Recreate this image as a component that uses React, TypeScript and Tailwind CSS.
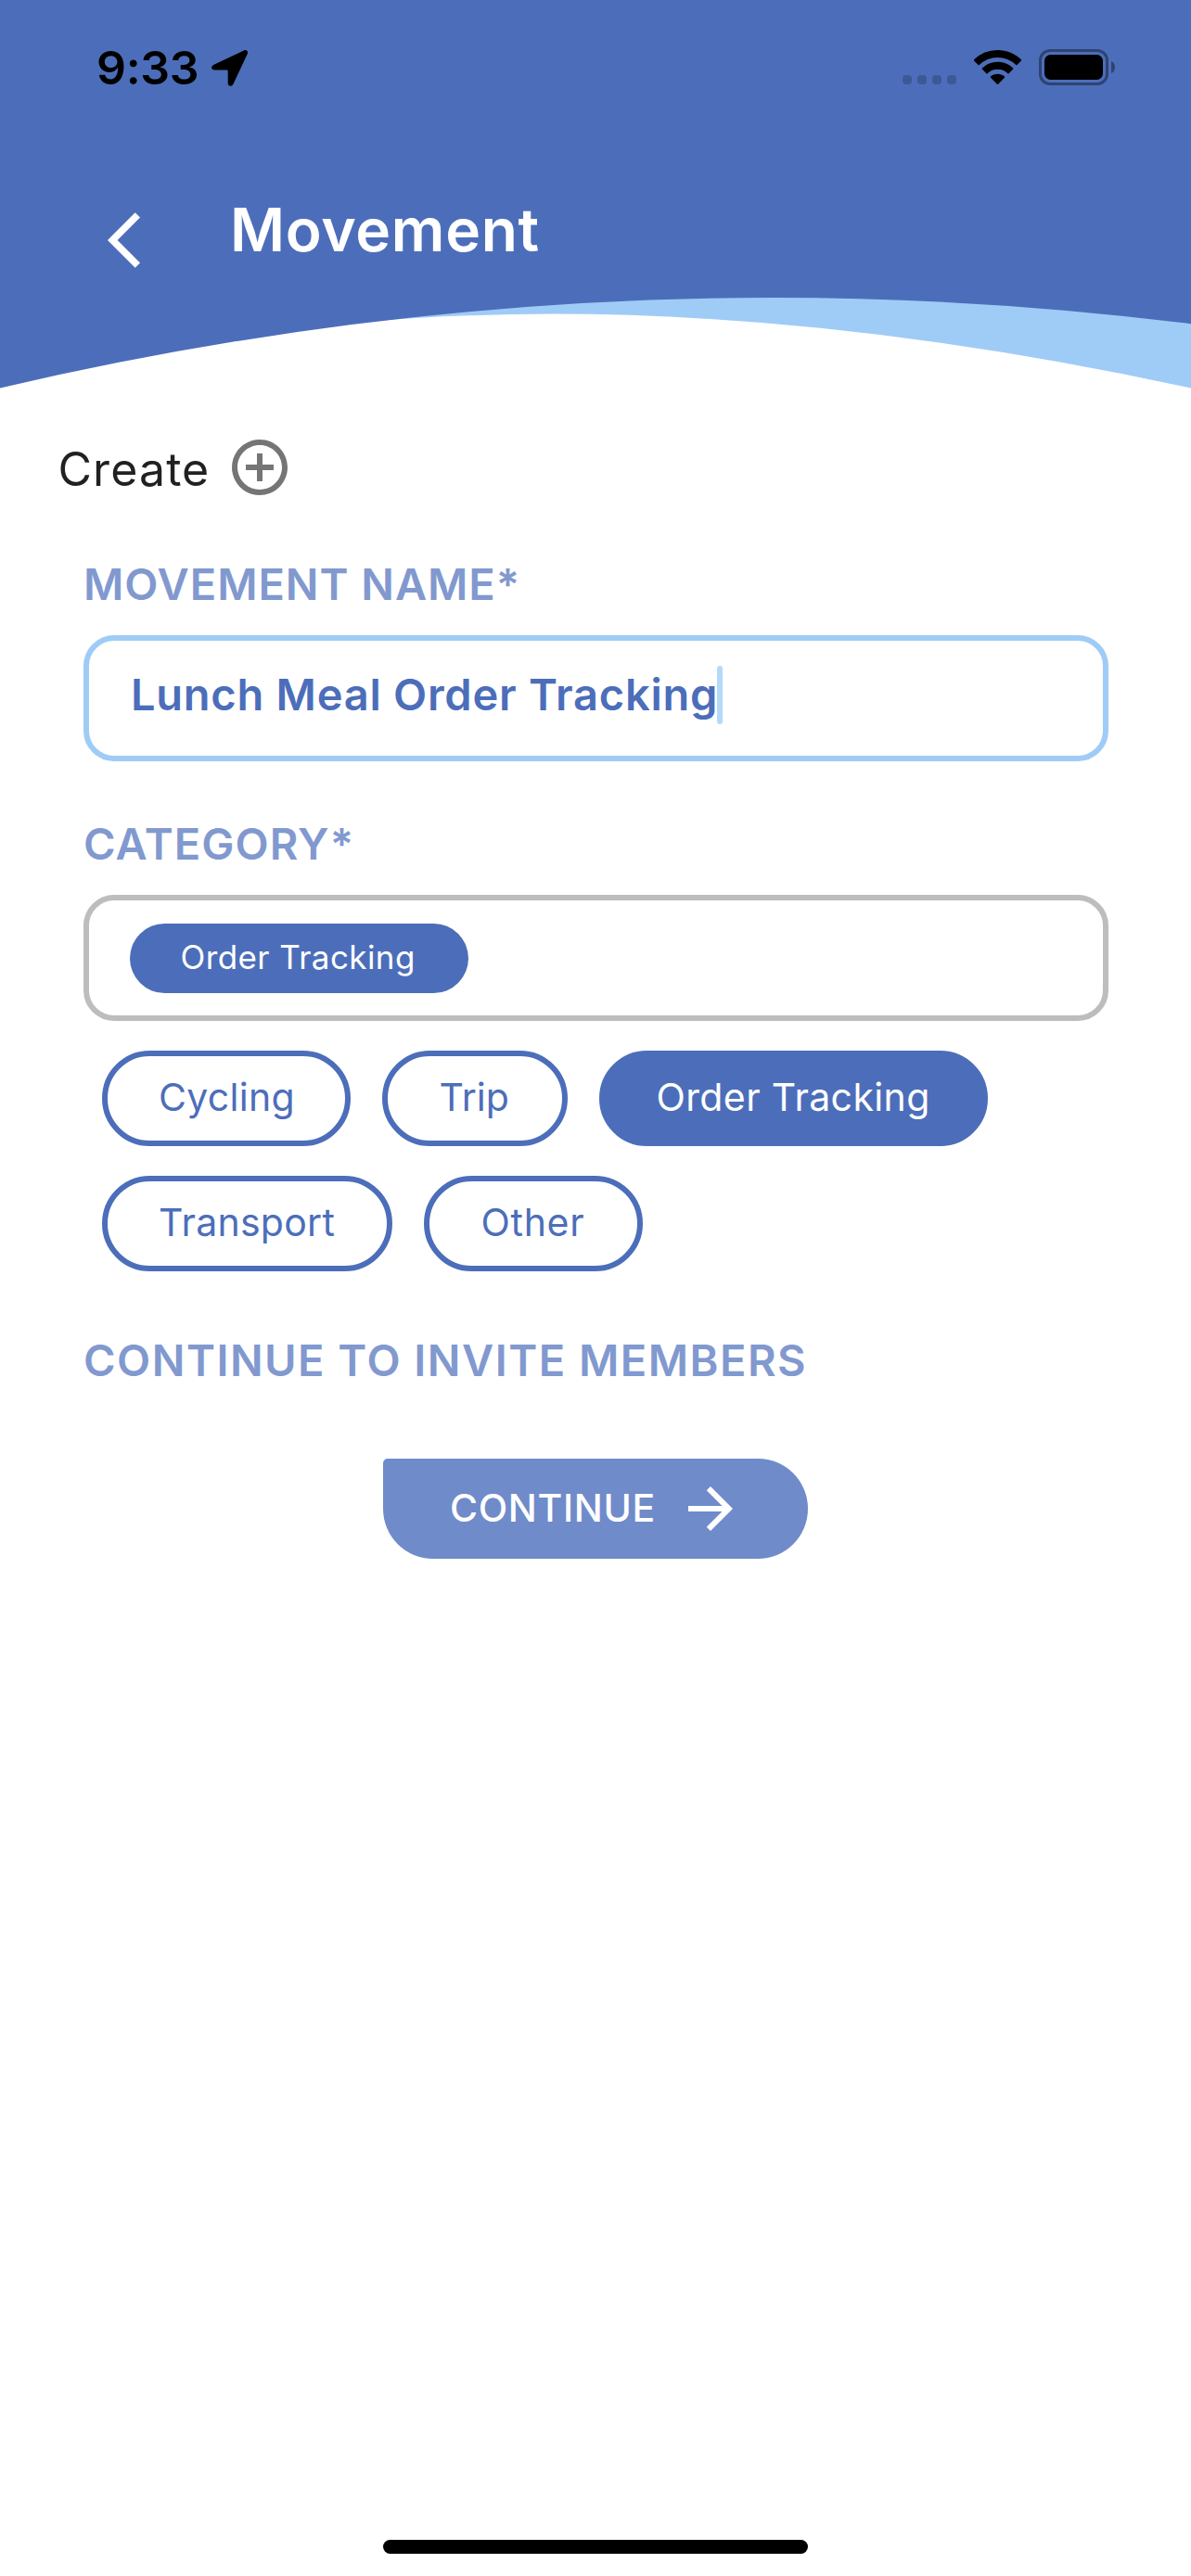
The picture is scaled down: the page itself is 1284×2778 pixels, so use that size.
type ChipProps = { label: string; className: string; selected?: boolean }

function StatusBar() {
  return (
    <div className="relative flex h-[103px] items-start pl-[104px] pr-[82px] pt-[43px] text-black">
      <span className="text-[50px] font-semibold leading-[60px] tracking-[-0.35px]">9:33</span>
      <svg className="ml-[14px] mt-[11px] h-[39px] w-[39px]" viewBox="0 0 39 39" aria-hidden="true">
        <path
          d="M2.6 15.8 34.8.5c3-1.3 5.1.9 3.9 3.8L23.6 36.4c-1.7 3.6-5.9 2.9-5.9-.9V22.6a1.2 1.2 0 0 0-1.2-1.2H3.3c-3.8 0-4.3-4-.7-5.6Z"
          fill="currentColor"
        />
      </svg>
      <div className="ml-auto mt-[38px] flex gap-[6px]">
        {[0, 1, 2, 3].map((dot) => (
          <span key={dot} className="h-[10px] w-[10px] rounded-[4px] bg-[#3d5896]" />
        ))}
      </div>
      <svg className="ml-[19px] mt-[11px] h-[38px] w-[51px]" viewBox="0 0 51 38" aria-hidden="true">
        <path
          d="M25.5 0C35.4 0 44.4 3.9 51 10.3c.3.3.3.8 0 1.1l-4.6 4.7c-.3.3-.8.3-1.1 0A28.5 28.5 0 0 0 25.5 8 28.5 28.5 0 0 0 5.7 16.1c-.3.3-.8.3-1.1 0L0 11.4c-.3-.3-.3-.8 0-1.1A36.6 36.6 0 0 1 25.5 0Z"
          fill="currentColor"
        />
        <path
          d="M25.5 12.8c6.5 0 12.4 2.5 16.7 6.6.4.3.4.8 0 1.2l-4.6 4.6c-.3.3-.8.3-1.1 0a16 16 0 0 0-22 0c-.3.3-.8.3-1.1 0l-4.6-4.6c-.4-.4-.4-.9 0-1.2a24.2 24.2 0 0 1 16.7-6.6Z"
          fill="currentColor"
        />
        <path
          d="M25.5 25.7c2.9 0 5.5 1 7.5 2.8.4.3.4.8 0 1.2l-6.9 7c-.3.4-.8.4-1.2 0l-6.9-7c-.4-.4-.4-.9 0-1.2 2-1.8 4.6-2.8 7.5-2.8Z"
          fill="currentColor"
        />
      </svg>
      <svg className="ml-[19px] mt-[10px] h-[39px] w-[82px]" viewBox="0 0 82 39" aria-hidden="true">
        <rect x="1.5" y="1.5" width="72" height="36" rx="10.5" fill="none" stroke="#2f4372" strokeWidth="3" />
        <rect x="6" y="6" width="63" height="27" rx="6.5" fill="currentColor" />
        <path d="M78 13c2.6 1 4 3.5 4 6.5s-1.4 5.5-4 6.5Z" fill="#2f4372" />
      </svg>
    </div>
  )
}

function Header() {
  return (
    <header className="relative h-[419px]">
      <svg className="absolute inset-0 h-full w-full" viewBox="0 0 1284 419" preserveAspectRatio="none" aria-hidden="true">
        <path d="M0 0H1284V418.5Q550 258.7 0 418.5Z" fill="#9fccf6" />
        <path d="M0 0H1284V349.3Q642 268.5 0 418.5Z" fill="#4c6eba" />
      </svg>
      <StatusBar />
      <div className="relative flex items-start pl-[116px] pt-[105px] text-white">
        <svg className="mt-[15px] h-[72px] w-[72px]" viewBox="0 0 24 24" aria-hidden="true">
          <path d="M11.67 3.87 9.9 2.1 0 12l9.9 9.9 1.77-1.77L3.54 12z" fill="currentColor" />
        </svg>
        <h1 className="ml-[60px] text-[64px] font-semibold leading-[80px] tracking-[0.7px]">Movement</h1>
      </div>
    </header>
  )
}

function Chip({ label, className, selected }: ChipProps) {
  return (
    <button
      className={`h-[103px] shrink-0 rounded-full border-[6px] border-[#4c6eba] pb-[3px] pl-[55.5px] text-left text-[41px] leading-[50px] ${
        selected ? 'bg-[#4c6eba] text-white' : 'bg-white text-[#4c6eba]'
      } ${className}`}
    >
      {label}
    </button>
  )
}

export default function App() {
  return (
    <div className="flex h-[2778px] w-[1284px] flex-col overflow-hidden whitespace-nowrap bg-white font-['Inter',sans-serif]">
      <Header />
      <main className="flex flex-1 flex-col">
        <div className="ml-[62.5px] mt-[49px] flex items-center">
          <span className="pt-[3px] text-[50px] leading-[60px] tracking-[1.1px] text-[#212121]">Create</span>
          <svg className="ml-[18px] h-[72px] w-[72px]" viewBox="0 0 24 24" aria-hidden="true">
            <path
              d="M13 7h-2v4H7v2h4v4h2v-4h4v-2h-4V7zm-1-5C6.48 2 2 6.48 2 12s4.48 10 10 10 10-4.48 10-10S17.52 2 12 2zm0 18c-4.41 0-8-3.59-8-8s3.59-8 8-8 8 3.59 8 8-3.59 8-8 8z"
              fill="#757575"
            />
          </svg>
        </div>

        <section className="ml-[90px] mr-[89px] mt-[60px]">
          <h2 className="text-[47px] font-semibold leading-[60px] tracking-[0.95px] text-[#8199cf]">MOVEMENT NAME*</h2>
          <div className="mt-[25px] flex h-[136px] items-start rounded-[33px] border-[6px] border-[#9fccf6] pl-[45px] pt-[27px]">
            <span className="mt-px text-[47px] font-semibold leading-[60px] tracking-[0.75px] text-[#4c6eba]">
              Lunch Meal Order Tracking
            </span>
            <span className="-ml-px h-[63px] w-[6px] rounded-full bg-[#b7d9f9]" />
          </div>
        </section>

        <section className="ml-[90px] mr-[89px] mt-[59px]">
          <h2 className="text-[47px] font-semibold leading-[60px] tracking-[1.05px] text-[#8199cf]">CATEGORY*</h2>
          <div className="mt-[25px] flex h-[136px] items-center rounded-[33px] border-[6px] border-[#bdbdbd] pl-[44px]">
            <span className="flex h-[75px] w-[365px] items-center rounded-full bg-[#4c6eba] pb-[2px] pl-[54.5px] text-[35px] leading-[42px] tracking-[0.42px] text-white">
              Order Tracking
            </span>
          </div>
          <div className="ml-[19.5px] mt-[32px] flex flex-col gap-[32px]">
            <div className="flex gap-[34px]">
              <Chip label="Cycling" className="w-[268.5px] tracking-[0.3px]" />
              <Chip label="Trip" className="w-[200px] tracking-[0px]" />
              <Chip label="Order Tracking" className="w-[419px] tracking-[0.38px]" selected />
            </div>
            <div className="flex gap-[34px]">
              <Chip label="Transport" className="w-[313.5px] tracking-[0.28px]" />
              <Chip label="Other" className="w-[235.5px] tracking-[0.7px]" />
            </div>
          </div>
        </section>

        <section className="mx-[90px] mt-[66px] flex flex-col">
          <h2 className="text-[47px] font-semibold leading-[60px] tracking-[1.48px] text-[#8199cf]">
            CONTINUE TO INVITE MEMBERS
          </h2>
          <button className="mt-[76px] flex h-[108px] w-[458px] items-center self-center rounded-[54px] rounded-tl-[5px] bg-[#6f8bca] pl-[72px] text-white">
            <span className="pb-[2px] text-[41px] font-medium leading-[50px] tracking-[0.67px]">CONTINUE</span>
            <svg className="ml-[23.5px] h-[72px] w-[72px]" viewBox="0 0 24 24" aria-hidden="true">
              <path d="m12 4-1.41 1.41L16.17 11H4v2h12.17l-5.58 5.59L12 20l8-8z" fill="currentColor" />
            </svg>
          </button>
        </section>
      </main>
      <div className="mb-[24px] h-[15px] w-[458px] self-center rounded-full bg-black" />
    </div>
  )
}
